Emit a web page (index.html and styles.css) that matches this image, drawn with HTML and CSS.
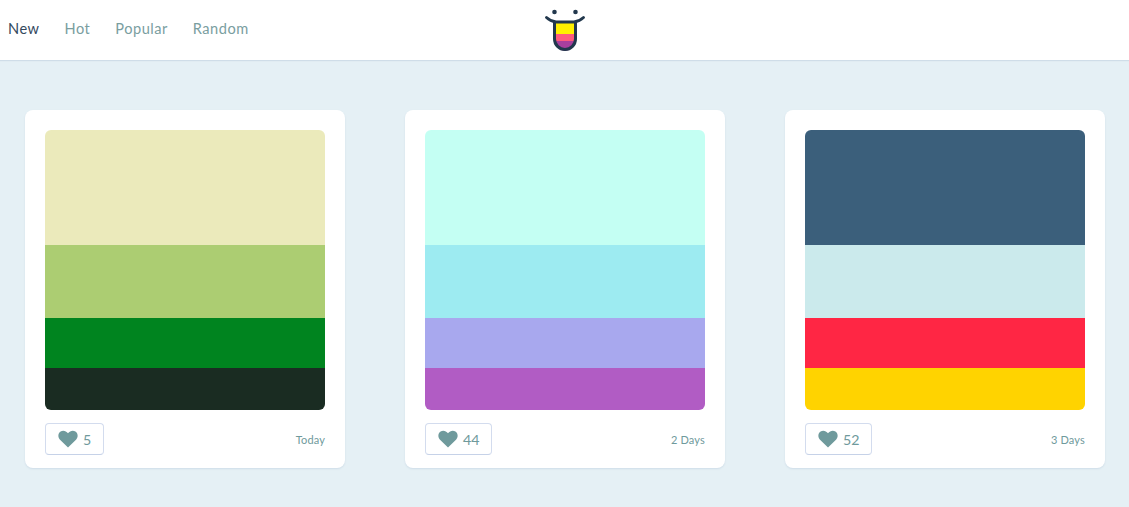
FILE: index.html
```html
<!DOCTYPE html>
<html>

<head>
    <title>Color Palettes</title>
    <link rel="stylesheet" href="styles.css">
</head>

<body>
    <header class="topbar">
        <nav class="menu">
            <a class="menu-link active" href="#">New</a>
            <a class="menu-link" href="#">Hot</a>
            <a class="menu-link" href="#">Popular</a>
            <a class="menu-link" href="#">Random</a>
        </nav>
        <svg class="logo" width="40" height="44" viewBox="0 0 40 44">
            <path d="M10 15h20v17a10 10 0 0 1-20 0z" fill="#fff000" />
            <path d="M10 27h20v7h-20z" fill="#ff5a7d" />
            <path d="M10 34h20a10 10 0 0 1-20 0z" fill="#a83f9e" />
            <circle cx="9.500" cy="5" r="2.300" fill="#22384d" />
            <circle cx="30.500" cy="5" r="2.300" fill="#22384d" />
            <path d="M1.500 10.500c3 3 6 4 9.500 4.500h18c3.500-.5 6.500-1.500 9.500-4.500" fill="none" stroke="#22384d" stroke-width="2.800" stroke-linecap="round" />
            <path d="M9.500 15v17a10.500 10.500 0 0 0 21 0v-17" fill="none" stroke="#22384d" stroke-width="3" />
        </svg>
    </header>

    <main class="grid">
        <div class="card">
            <div class="palette">
                <div class="c1" style="background-color: #ebeabb"></div>
                <div class="c2" style="background-color: #accd72"></div>
                <div class="c3" style="background-color: #00841f"></div>
                <div class="c4" style="background-color: #1a2c22"></div>
            </div>
            <div class="card-foot">
                <button class="like">
                    <svg class="heart" width="20" height="18" viewBox="0 0 20 18"><path d="M10 17.500 2 9.800C-.6 7.200.1 3 2.600 1.500 5 .1 8 .7 10 3.300 12 .7 15 .1 17.400 1.500 19.900 3 20.600 7.200 18 9.800z" /></svg>
                    <span>5</span>
                </button>
                <span class="date">Today</span>
            </div>
        </div>

        <div class="card">
            <div class="palette">
                <div class="c1" style="background-color: #c4fff3"></div>
                <div class="c2" style="background-color: #9debf1"></div>
                <div class="c3" style="background-color: #a8a8ee"></div>
                <div class="c4" style="background-color: #b15cc4"></div>
            </div>
            <div class="card-foot">
                <button class="like">
                    <svg class="heart" width="20" height="18" viewBox="0 0 20 18"><path d="M10 17.500 2 9.800C-.6 7.200.1 3 2.600 1.500 5 .1 8 .7 10 3.300 12 .7 15 .1 17.400 1.500 19.900 3 20.600 7.200 18 9.800z" /></svg>
                    <span>44</span>
                </button>
                <span class="date">2 Days</span>
            </div>
        </div>

        <div class="card">
            <div class="palette">
                <div class="c1" style="background-color: #3b5f7b"></div>
                <div class="c2" style="background-color: #cbeaec"></div>
                <div class="c3" style="background-color: #ff2644"></div>
                <div class="c4" style="background-color: #ffd300"></div>
            </div>
            <div class="card-foot">
                <button class="like">
                    <svg class="heart" width="20" height="18" viewBox="0 0 20 18"><path d="M10 17.500 2 9.800C-.6 7.200.1 3 2.600 1.500 5 .1 8 .7 10 3.300 12 .7 15 .1 17.400 1.500 19.900 3 20.600 7.200 18 9.800z" /></svg>
                    <span>52</span>
                </button>
                <span class="date">3 Days</span>
            </div>
        </div>
    </main>
</body>

</html>
```

FILE: styles.css
```css
body {
    font-family: Lato, "Open Sans", sans-serif;
    margin: 0;
    padding: 0;
    height: 507px;
    overflow: hidden;
    background-color: #e5f0f5;
}

.topbar {
    height: 60px;
    background-color: white;
    box-shadow: 0 1px 1px #cfdde8;
    display: grid;
    grid-template-columns: 1fr;
    align-items: center;
    justify-items: center;
    position: relative;
}

.menu {
    justify-self: start;
    display: flex;
    gap: 25px;
    padding-left: 8px;
    margin-bottom: 3px;
    grid-row: 1;
    grid-column: 1;
}

.menu-link {
    font-size: 14.600px;
    letter-spacing: 0.5px;
    color: #7a9e9f;
    text-decoration: none;
}

.menu-link.active {
    color: #34495e;
}

.logo {
    grid-row: 1;
    grid-column: 1;
    margin-bottom: 2px;
}

.grid {
    display: grid;
    grid-template-columns: repeat(3, 320px);
    gap: 60px;
    padding: 50px 25px 0;
}

.card {
    height: 358px;
    box-sizing: border-box;
    padding: 20px;
    background-color: white;
    border-radius: 8px;
    box-shadow: 0 1px 2px #cfdde8;
}

.palette {
    height: 280px;
    border-radius: 6px;
    overflow: hidden;
    display: flex;
    flex-direction: column;
}

.c1 {
    height: 115px;
}

.c2 {
    height: 73px;
}

.c3 {
    height: 50px;
}

.c4 {
    height: 42px;
}

.card-foot {
    display: flex;
    justify-content: space-between;
    align-items: center;
    margin-top: 13px;
}

.like {
    height: 32px;
    box-sizing: border-box;
    display: flex;
    align-items: center;
    gap: 5px;
    padding: 0 12px;
    font-family: inherit;
    font-size: 14.200px;
    color: #6f9a9c;
    background-color: white;
    border: 1px solid #d3dcee;
    border-bottom-color: #c6d2e8;
    border-radius: 4px;
}

.heart {
    fill: #6f9a9c;
}

.date {
    font-size: 11px;
    letter-spacing: 0.15px;
    color: #6f9a9c;
}
```
